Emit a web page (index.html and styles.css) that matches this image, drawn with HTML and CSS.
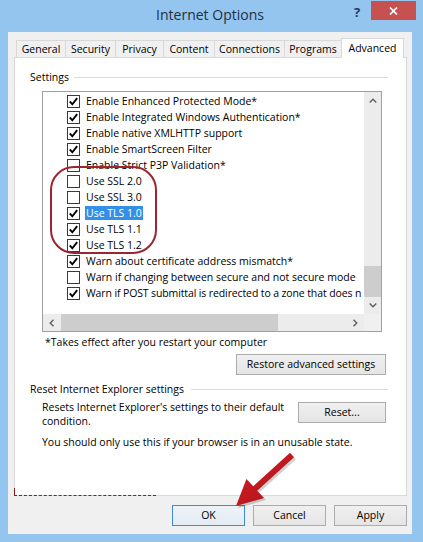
FILE: index.html
```html
<!DOCTYPE html>
<html>
<head>
<meta charset="utf-8">
<title>Internet Options</title>
<link rel="stylesheet" href="styles.css">
</head>
<body>
<div class="window">
  <div class="titlebar">
    <div class="title">Internet Options</div>
    <div class="help">?</div>
    <div class="close"><svg width="9" height="8" viewBox="0 0 9 8"><path d="M1 0.5 L8 7.5 M8 0.5 L1 7.5" stroke="#fff" stroke-width="1.7" fill="none"/></svg></div>
  </div>
  <div class="client">
    <div class="tabs">
      <div class="tab w-general">General</div>
      <div class="tab w-security">Security</div>
      <div class="tab w-privacy">Privacy</div>
      <div class="tab w-content">Content</div>
      <div class="tab w-connections">Connections</div>
      <div class="tab w-programs">Programs</div>
      <div class="tab active w-advanced">Advanced</div>
    </div>
    <div class="panel">
      <div class="group-head"><span>Settings</span><i class="rule"></i></div>
      <div class="listbox">
        <div class="list-content">
          <div class="row"><span class="cb"><svg class="tick" viewBox="0 0 11 11"><path d="M1.8 5.4 L4.3 8.3 L9.2 2.2"/></svg></span><span class="lbl">Enable Enhanced Protected Mode*</span></div>
          <div class="row"><span class="cb"><svg class="tick" viewBox="0 0 11 11"><path d="M1.8 5.4 L4.3 8.3 L9.2 2.2"/></svg></span><span class="lbl">Enable Integrated Windows Authentication*</span></div>
          <div class="row"><span class="cb"><svg class="tick" viewBox="0 0 11 11"><path d="M1.8 5.4 L4.3 8.3 L9.2 2.2"/></svg></span><span class="lbl">Enable native XMLHTTP support</span></div>
          <div class="row"><span class="cb"><svg class="tick" viewBox="0 0 11 11"><path d="M1.8 5.4 L4.3 8.3 L9.2 2.2"/></svg></span><span class="lbl">Enable SmartScreen Filter</span></div>
          <div class="row"><span class="cb"></span><span class="lbl">Enable Strict P3P Validation*</span></div>
          <div class="row"><span class="cb"></span><span class="lbl">Use SSL 2.0</span></div>
          <div class="row"><span class="cb"></span><span class="lbl">Use SSL 3.0</span></div>
          <div class="row"><span class="cb"><svg class="tick" viewBox="0 0 11 11"><path d="M1.8 5.4 L4.3 8.3 L9.2 2.2"/></svg></span><span class="lbl sel">Use TLS 1.0</span></div>
          <div class="row"><span class="cb"><svg class="tick" viewBox="0 0 11 11"><path d="M1.8 5.4 L4.3 8.3 L9.2 2.2"/></svg></span><span class="lbl">Use TLS 1.1</span></div>
          <div class="row"><span class="cb"><svg class="tick" viewBox="0 0 11 11"><path d="M1.8 5.4 L4.3 8.3 L9.2 2.2"/></svg></span><span class="lbl">Use TLS 1.2</span></div>
          <div class="row"><span class="cb"><svg class="tick" viewBox="0 0 11 11"><path d="M1.8 5.4 L4.3 8.3 L9.2 2.2"/></svg></span><span class="lbl">Warn about certificate address mismatch*</span></div>
          <div class="row"><span class="cb"></span><span class="lbl">Warn if changing between secure and not secure mode</span></div>
          <div class="row"><span class="cb"><svg class="tick" viewBox="0 0 11 11"><path d="M1.8 5.4 L4.3 8.3 L9.2 2.2"/></svg></span><span class="lbl tight">Warn if POST submittal is redirected to a zone that does n</span></div>
        </div>
        <div class="vscroll">
          <div class="sa"><svg width="8" height="5" viewBox="0 0 8 5"><path d="M0.7 4.5 L4 1.2 L7.3 4.5" class="chev"/></svg></div>
          <div class="vtrack"><div class="vthumb"></div></div>
          <div class="sa"><svg width="8" height="5" viewBox="0 0 8 5"><path d="M0.7 0.5 L4 3.8 L7.3 0.5" class="chev"/></svg></div>
        </div>
        <div class="hscroll">
          <div class="sa h"><svg width="5" height="8" viewBox="0 0 5 8"><path d="M4.5 0.7 L1.2 4 L4.5 7.3" class="chev"/></svg></div>
          <div class="hthumb"></div>
          <div class="spacer"></div>
          <div class="sa h"><svg width="5" height="8" viewBox="0 0 5 8"><path d="M0.5 0.7 L3.8 4 L0.5 7.3" class="chev"/></svg></div>
        </div>
        <div class="corner"></div>
      </div>
      <p class="note">*Takes effect after you restart your computer</p>
      <button class="btn restore">Restore advanced settings</button>
      <div class="group-head reset-head"><span>Reset Internet Explorer settings</span><i class="rule"></i></div>
      <div class="reset-row">
        <p class="reset-text">Resets Internet Explorer's settings to their default<br>condition.</p>
        <button class="btn reset">Reset...</button>
      </div>
      <p class="warn">You should only use this if your browser is in an unusable state.</p>
      <div class="redmark"></div>
    </div>
    <div class="buttons">
      <button class="btn dlg default">OK</button>
      <button class="btn dlg">Cancel</button>
      <button class="btn dlg">Apply</button>
    </div>
  </div>
  <div class="circle"></div>
  <svg class="arrow" viewBox="0 0 423 542" width="423" height="542">
    <defs>
      <linearGradient id="ag" x1="0" y1="0" x2="1" y2="1">
        <stop offset="0" stop-color="#d8232a"/>
        <stop offset="1" stop-color="#a80f16"/>
      </linearGradient>
    </defs>
    <polygon points="296,459.2 292,454.8 255.2,488.3 248.4,480.9 238,508 266,500.1 259.2,492.7" fill="#000" opacity="0.18"/>
    <polygon points="294,457.2 290,452.8 253.2,486.3 246.4,478.9 236,506 264,498.1 257.2,490.7" fill="url(#ag)"/>
  </svg>
</div>
</body>
</html>
```
FILE: styles.css
```css
* { box-sizing: border-box; }
html, body { margin: 0; padding: 0; }
body {
  width: 423px;
  height: 542px;
  overflow: hidden;
  font-family: "Open Sans", "Noto Sans", sans-serif;
  font-size: 10.5px;
  color: #000;
}
.window {
  position: relative;
  width: 423px;
  height: 542px;
  background: #93c5ee;
  display: flex;
  flex-direction: column;
}
.titlebar {
  height: 32px;
  flex: none;
  display: flex;
  align-items: flex-start;
}
.title {
  flex: 1;
  text-align: center;
  padding-left: 70px;
  padding-top: 6px;
  font-size: 14px;
  line-height: 18px;
  color: #1f2f44;
}
.help {
  width: 14px;
  margin-top: 4px;
  margin-right: 7px;
  text-align: center;
  font-weight: bold;
  font-size: 13px;
  line-height: 16px;
  color: #1e3a5f;
}
.close {
  width: 45px;
  height: 19px;
  margin-top: 1px;
  margin-right: 7px;
  background: #c75050;
  display: flex;
  align-items: center;
  justify-content: center;
}
.client {
  flex: 1;
  margin: 0 11px 8px 8px;
  background: #f0f0f0;
  display: flex;
  flex-direction: column;
  padding: 6px 5px 0 6px;
}
.tabs {
  height: 19px;
  flex: none;
  display: flex;
  align-items: flex-end;
  margin-left: 2px;
  position: relative;
  z-index: 2;
}
.tab {
  height: 17px;
  border: 1px solid #d9d9d9;
  border-bottom: none;
  margin-left: -1px;
  background: #f0f0f0;
  text-align: center;
  line-height: 16px;
  white-space: nowrap;
}
.tab:first-child { margin-left: 0; }
.tab.active {
  height: 20px;
  margin-bottom: -1px;
  background: #fff;
  padding-top: 1px;
  position: relative;
  z-index: 3;
}
.w-general { width: 50px; }
.w-security { width: 51px; }
.w-privacy { width: 49px; }
.w-content { width: 52px; }
.w-connections { width: 71px; }
.w-programs { width: 58px; }
.w-advanced { width: 63px; }
.panel {
  position: relative;
  flex: none;
  height: 439px;
  background: #fff;
  border: 1px solid #d9d9d9;
  padding: 12px 18px 0 15px;
  display: flex;
  flex-direction: column;
}
.group-head {
  display: flex;
  align-items: center;
  height: 14px;
  line-height: 14px;
  gap: 5px;
  white-space: nowrap;
}
.rule {
  flex: 1;
  height: 1px;
  background: #dcdcdc;
}
.listbox {
  margin: 7px 0 0 12px;
  width: 340px;
  height: 241px;
  flex: none;
  border: 1px solid #a0a0a0;
  background: #fff;
  display: grid;
  grid-template-columns: 1fr 17px;
  grid-template-rows: 1fr 17px;
}
.list-content {
  overflow: hidden;
  padding-top: 1px;
}
.row {
  height: 16px;
  display: flex;
  align-items: center;
  padding-left: 24px;
  white-space: nowrap;
}
.cb {
  flex: none;
  width: 13px;
  height: 13px;
  border: 1px solid #3a3a3a;
  background: #fff;
  display: flex;
  align-items: center;
  justify-content: center;
}
.tick {
  width: 11px;
  height: 11px;
  display: block;
}
.tick path {
  fill: none;
  stroke: #000;
  stroke-width: 1.9;
}
.lbl {
  margin-left: 5px;
  padding: 0 1px;
  line-height: 14px;
}
.lbl.tight {
  letter-spacing: -0.12px;
}
.lbl.sel {
  background: #3390e6;
  color: #fff;
}
.vscroll {
  background: #ececec;
  display: flex;
  flex-direction: column;
}
.sa {
  height: 17px;
  flex: none;
  display: flex;
  align-items: center;
  justify-content: center;
}
.sa.h { width: 17px; height: auto; }
.chev {
  fill: none;
  stroke: #606060;
  stroke-width: 1.4;
}
.vtrack {
  flex: 1;
  display: flex;
  flex-direction: column;
  justify-content: flex-end;
}
.vthumb {
  height: 31px;
  background: #cdcdcd;
}
.hscroll {
  background: #ececec;
  display: flex;
}
.hthumb {
  width: 217px;
  margin-left: 1px;
  background: #cdcdcd;
}
.spacer { flex: 1; }
.corner { background: #f0f0f0; }
.note {
  margin: 3px 0 0 15px;
  line-height: 14px;
}
.btn {
  font-family: inherit;
  font-size: 10.5px;
  color: #000;
  background: linear-gradient(#f0f0f0, #e5e5e5);
  border: 1px solid #acacac;
  padding: 0;
  height: 21px;
  line-height: 19px;
  text-align: center;
}
.restore {
  align-self: flex-end;
  margin-top: 5px;
  margin-right: 2px;
  width: 150px;
}
.reset-head {
  margin-top: 7px;
  gap: 7px;
}
.reset-row {
  display: flex;
  align-items: flex-start;
  margin: 4px 0 0 12px;
}
.reset-text {
  margin: 0;
  line-height: 14px;
}
.reset {
  margin-left: auto;
  margin-right: 2px;
  margin-top: 2px;
  width: 88px;
}
.warn {
  margin: 7px 0 0 12px;
  line-height: 14px;
}
.redmark {
  position: absolute;
  left: -1px;
  bottom: -1px;
  width: 142px;
  height: 8px;
  border-left: 1px solid #8b1d1d;
  border-bottom: 1px dashed #8b1d1d;
}
.buttons {
  display: flex;
  justify-content: flex-end;
  gap: 8px;
  margin-top: 9px;
}
.dlg { width: 73px; }
.dlg.default {
  border-color: #3c8bd9;
  background: linear-gradient(#eef3f8, #e3ebf3);
}
.circle {
  position: absolute;
  left: 50px;
  top: 166px;
  width: 107px;
  height: 88px;
  border: 2px solid #9b2530;
  border-radius: 24px;
}
.arrow {
  position: absolute;
  left: 0;
  top: 0;
  pointer-events: none;
}
```
